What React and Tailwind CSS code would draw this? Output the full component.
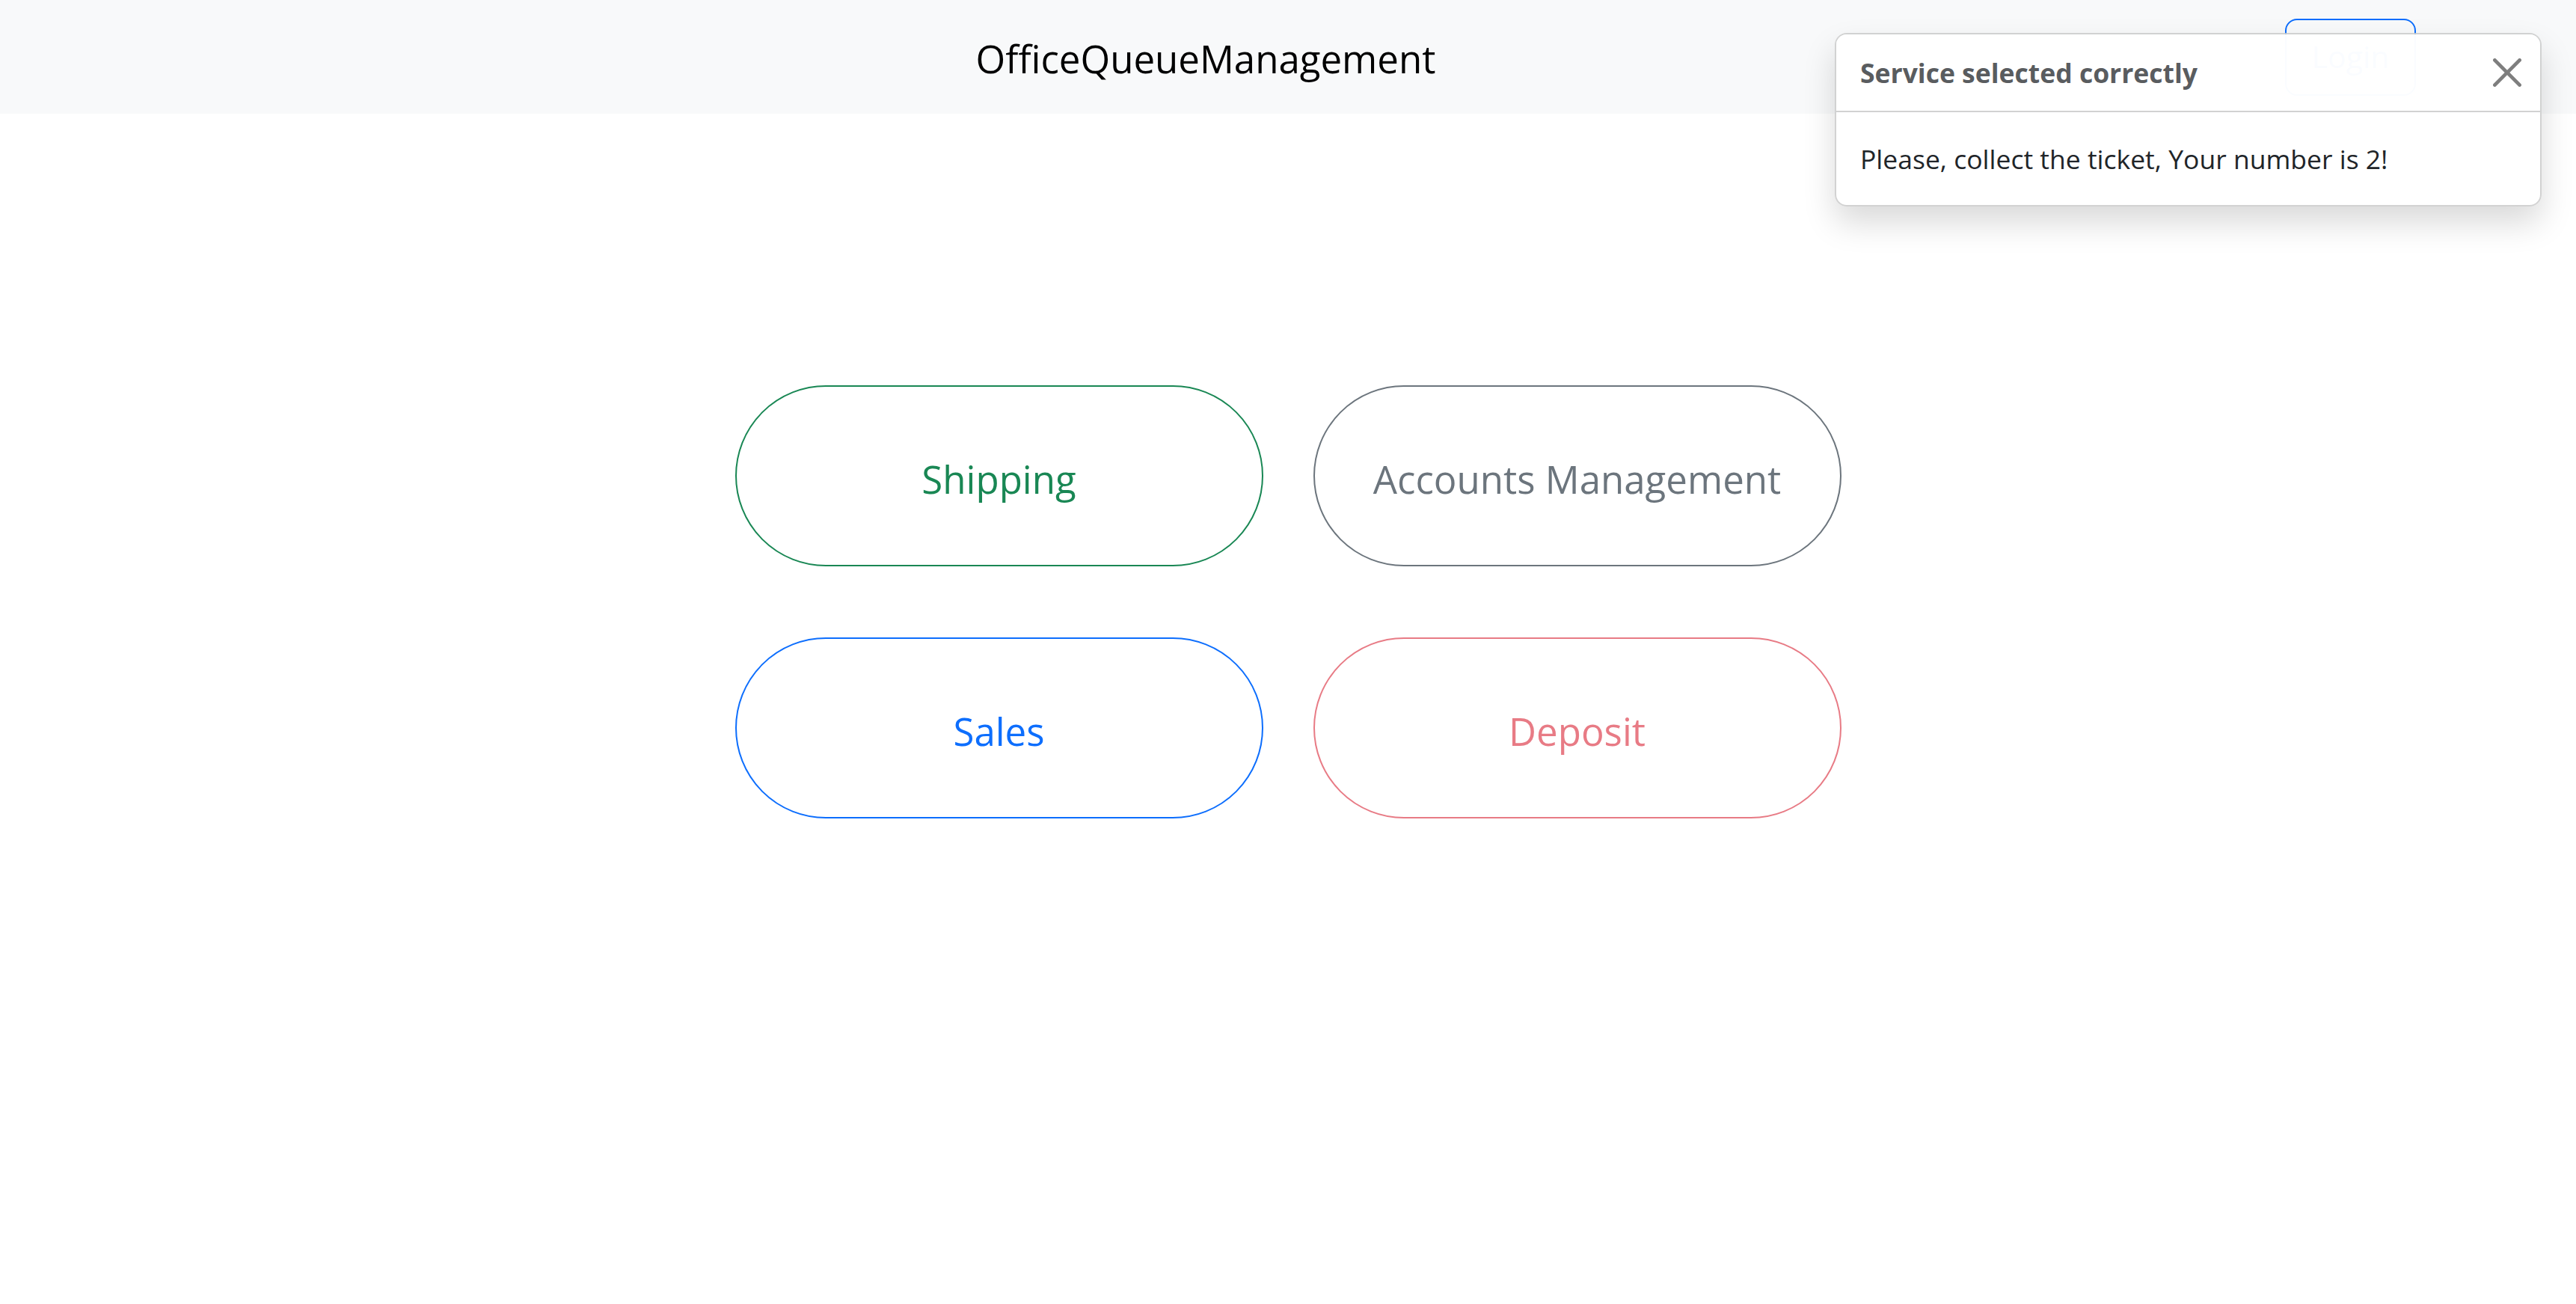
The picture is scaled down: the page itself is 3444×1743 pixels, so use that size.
const services = [
  { name: "Shipping", cls: "border-[#198754] text-[#198754]" },
  { name: "Accounts Management", cls: "border-[#6c757d] text-[#6c757d]" },
  { name: "Sales", cls: "border-[#0d6efd] text-[#0d6efd]" },
  { name: "Deposit", cls: "border-[#dc3545] text-[#dc3545] opacity-65" },
];

function CloseIcon() {
  return (
    <svg viewBox="0 0 16 16" className="w-[38px] h-[38px]" fill="#000">
      <path d="M.293.293a1 1 0 0 1 1.414 0L8 6.586 14.293.293a1 1 0 1 1 1.414 1.414L9.414 8l6.293 6.293a1 1 0 0 1-1.414 1.414L8 9.414l-6.293 6.293a1 1 0 0 1-1.414-1.414L6.586 8 .293 1.707a1 1 0 0 1 0-1.414z" />
    </svg>
  );
}

export default function App() {
  return (
    <div className="relative min-h-[1743px] bg-white font-['Open_Sans',sans-serif] text-[#212529]">
      <nav className="flex items-center h-[152px] bg-[#f8f9fa]">
        <div className="flex-1 flex justify-center pl-[169px] pt-[4px]">
          <span className="text-[51px] leading-[81px] text-black">OfficeQueueManagement</span>
        </div>
        <button className="w-[175px] h-[103px] mr-[214px] border-2 border-[#0d6efd] rounded-[16px] text-[41px] text-[#0d6efd]">
          Login
        </button>
      </nav>

      <main className="flex justify-center pt-[363px]">
        <div className="grid grid-cols-2 gap-x-[67px] gap-y-[95px]">
          {services.map((s) => (
            <button
              key={s.name}
              className={`w-[706px] h-[242px] rounded-full border-2 bg-white flex items-center justify-center pt-[8px] text-[51px] ${s.cls}`}
            >
              {s.name}
            </button>
          ))}
        </div>
      </main>

      <div className="absolute top-[44px] right-[46px] w-[945px] rounded-[16px] border-2 border-black/[0.175] bg-white/85 shadow-[0_22px_43px_rgba(0,0,0,0.15)]">
        <div className="flex items-center px-[32px] py-[22px] bg-white/85 border-b-2 border-black/[0.175] rounded-t-[14px]">
          <strong className="flex-1 text-[35.5px] leading-[58px] font-bold text-[#595c5f]">
            Service selected correctly
          </strong>
          <button className="-mr-[16px] ml-[32px] p-[9px] opacity-50">
            <CloseIcon />
          </button>
        </div>
        <div className="px-[32px] py-[33px] text-[35.5px] leading-[58px]">
          Please, collect the ticket, Your number is 2!
        </div>
      </div>
    </div>
  );
}
